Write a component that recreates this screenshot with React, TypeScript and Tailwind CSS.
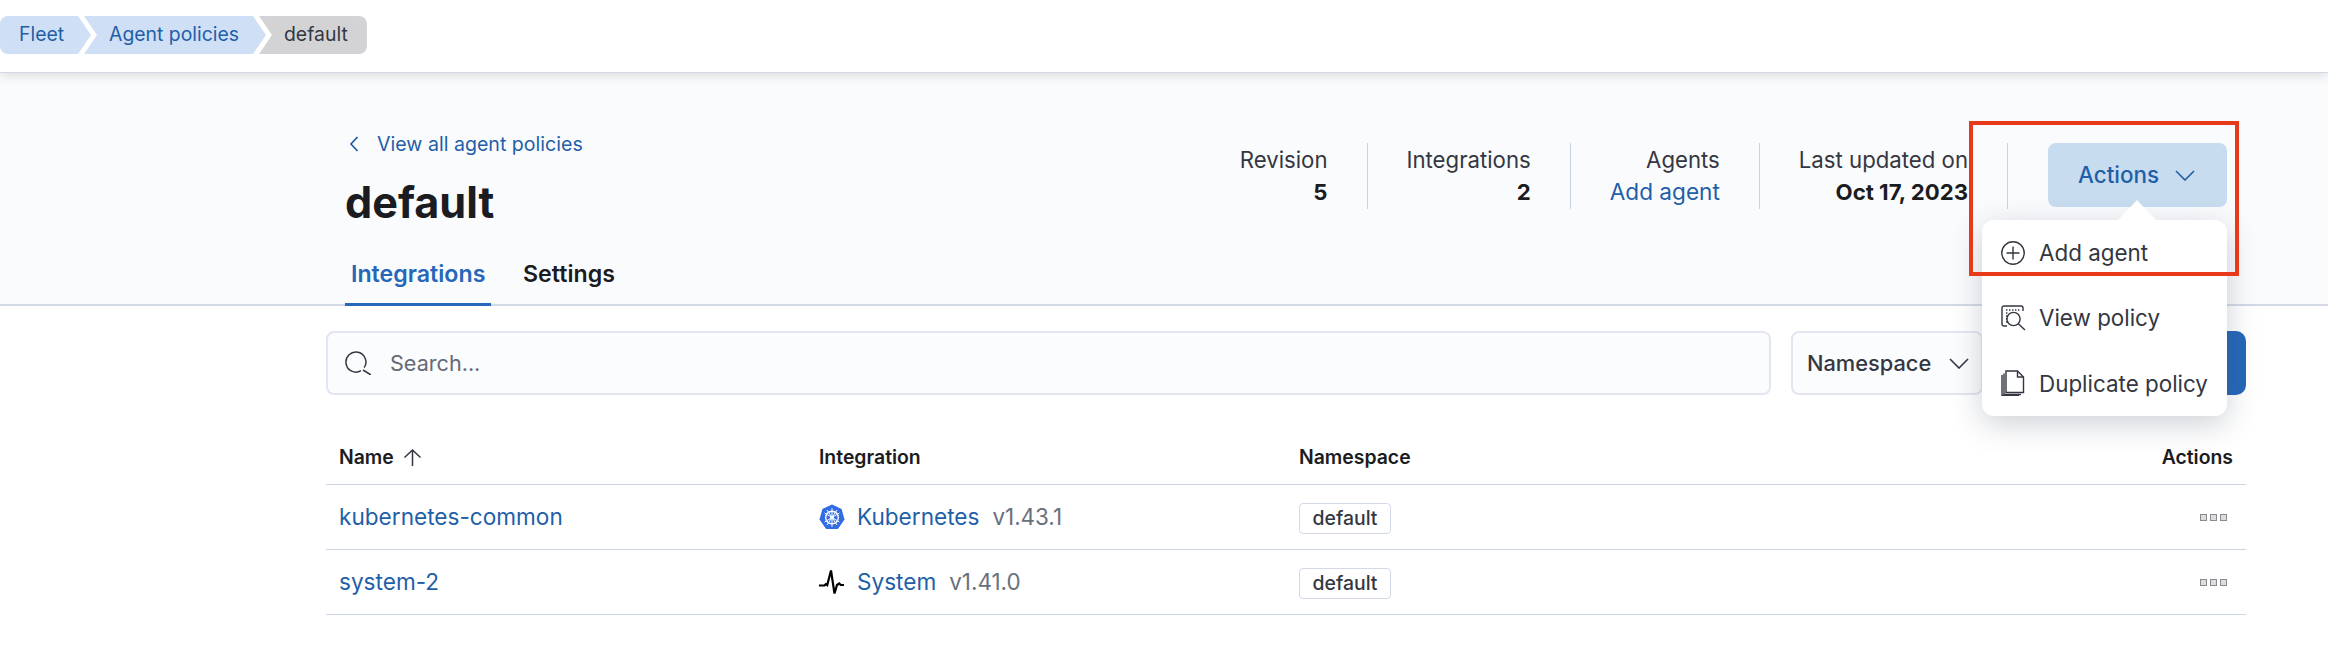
import React from "react";

const F = { fontFamily: "Inter, 'Liberation Sans', sans-serif" };

function Crumb({ label, kind }: { label: string; kind: "first" | "mid" | "last" }) {
  const clip =
    kind === "first"
      ? "polygon(0 0, calc(100% - 13px) 0, 100% 50%, calc(100% - 13px) 100%, 0 100%)"
      : kind === "last"
      ? "polygon(0 0, 100% 0, 100% 100%, 0 100%, 13px 50%)"
      : "polygon(0 0, calc(100% - 13px) 0, 100% 50%, calc(100% - 13px) 100%, 0 100%, 13px 50%)";
  const cls =
    kind === "first"
      ? "w-[91px] pl-[19px] rounded-l-[8px] bg-[#cfdff5] text-[#1f5fa8]"
      : kind === "mid"
      ? "-ml-[7px] w-[182px] pl-[25px] bg-[#cfdff5] text-[#1f5fa8]"
      : "-ml-[7px] w-[108px] pl-[25px] rounded-r-[8px] bg-[#d3d3d6] text-[#343741]";
  return (
    <div style={{ clipPath: clip }} className={`flex h-[38px] items-center text-[19.4px] ${cls}`}>
      {label}
    </div>
  );
}

function Stat({ label, value, link }: { label: string; value: string; link?: boolean }) {
  return (
    <div className="flex h-[66px] flex-col items-end justify-center border-r border-[#c9d3e3] pr-[39px]">
      <div className="whitespace-nowrap text-[22.2px] leading-[32px] text-[#343741]">{label}</div>
      <div className={`whitespace-nowrap leading-[32px] ${link ? "text-[22.6px] text-[#1f5fa8]" : "text-[22.2px] font-bold text-[#1a1c21]"}`}>{value}</div>
    </div>
  );
}

function PlusIcon() {
  return (
    <svg width="24" height="24" viewBox="0 0 24 24" fill="none" stroke="#343741" strokeWidth="1.4">
      <circle cx="12" cy="12" r="11.2" />
      <path d="M12 5.5v13M5.5 12h13" />
    </svg>
  );
}
function ViewIcon() {
  return (
    <svg width="26" height="26" viewBox="0 0 26 26" fill="none" stroke="#343741" strokeWidth="1.4">
      <path d="M6 21H3a2 2 0 0 1-2-2V3a2 2 0 0 1 2-2h17a2 2 0 0 1 2 2v3" />
      <path d="M5 5h14M5 8h3M5 11h2M5 14h1.5M5 17h1.5" strokeDasharray="1.4 1.6" />
      <circle cx="12.5" cy="14" r="6.6" />
      <path d="M17.5 19l6.5 6" />
    </svg>
  );
}
function CopyIcon() {
  return (
    <svg width="24" height="26" viewBox="0 0 24 26" fill="none" stroke="#343741" strokeWidth="1.4">
      <path d="M5 1h11.5L22.5 7v15.5H5z" />
      <path d="M16.5 1v6h6" />
      <path d="M3 3.5v21h17" />
      <path d="M1 5v20.5h17" />
    </svg>
  );
}
function Chevron({ color = "#343741" }: { color?: string }) {
  return (
    <svg width="20" height="11" viewBox="0 0 20 11" fill="none" stroke={color} strokeWidth="1.6">
      <path d="M1 1l9 9 9-9" />
    </svg>
  );
}
function K8s() {
  return (
    <svg width="26" height="26" viewBox="0 0 26 26">
      <path d="M13 0.5l9.6 4.6 2.9 10.4-6.6 9.5H7.1L0.5 15.5 3.4 5.1z" fill="#326ce5" />
      <g stroke="#fff" fill="none">
        <circle cx="13" cy="13.5" r="6.3" strokeWidth="1.4" />
        <circle cx="13" cy="13.5" r="1.5" fill="#fff" strokeWidth="0.6" />
        <path d="M13 4.2v18.6M5.6 9l14.8 9M20.4 9L5.6 18M8 21l10-15M18 21L8 6" strokeWidth="1" />
      </g>
    </svg>
  );
}
function Pulse() {
  return (
    <svg width="26" height="26" viewBox="0 0 26 26" fill="none" stroke="#000" strokeWidth="2.2">
      <path d="M0 16.5h5.5l1.3-1.3 1.4 1L12 1.5l3.5 23 2.5-8.5 2.2-1.5 1.6 1.5H25" />
    </svg>
  );
}
function Dots() {
  return (
    <div className="flex gap-[3px]">
      {[0, 1, 2].map((i) => (
        <span key={i} className="h-[7px] w-[7px] border-[1.5px] border-[#8a8a8f] bg-[#dcdcde]" />
      ))}
    </div>
  );
}

function Row({ name, integ, ver, icon }: { name: string; integ: string; ver: string; icon: React.ReactNode }) {
  return (
    <div className="flex h-[65px] items-center border-b border-[#cdd5e3] pl-[13px] pr-[19px] text-[22.6px]">
      <div className="w-[480px] text-[#1f5fa8]">{name}</div>
      <div className="flex w-[480px] items-center">
        <span className="mr-[12px] flex">{icon}</span>
        <span className="text-[#1f5fa8]">{integ}</span>
        <span className="ml-[13px] text-[22.4px] text-[#69707d]">{ver}</span>
      </div>
      <div className="flex-1">
        <span className="inline-flex h-[31px] w-[92px] items-center justify-center rounded-[4px] border border-[#d3dae6] text-[19.4px] font-medium text-[#343741]">default</span>
      </div>
      <Dots />
    </div>
  );
}

export default function App() {
  return (
    <div style={F} className="relative h-[656px] w-[2328px] overflow-hidden bg-white">
      {/* top bar */}
      <div className="relative z-10 flex h-[73px] items-start border-b border-[#d3dae6] bg-white pt-[16px] shadow-[0_3px_10px_rgba(0,0,0,0.12)]">
        <Crumb label="Fleet" kind="first" />
        <Crumb label="Agent policies" kind="mid" />
        <Crumb label="default" kind="last" />
      </div>

      {/* header */}
      <div className="relative flex h-[233px] border-b-2 border-[#d3dae6] bg-[#fafbfd] pl-[345px] pr-[101px]">
        <div className="flex-1 pt-[59px]">
          <div className="flex items-center text-[19.6px] leading-[24px] text-[#1f5fa8]">
            <svg width="10" height="16" viewBox="0 0 10 16" fill="none" stroke="#1f5fa8" strokeWidth="1.7" className="ml-[4px] mr-[18px]">
              <path d="M8.5 1L2 8l6.5 7" />
            </svg>
            View all agent policies
          </div>
          <h1 className="mt-[19px] text-[43.2px] font-bold leading-[54px] text-[#1a1c21]">default</h1>
          <div className="mt-[15px] flex text-[23.2px] font-semibold leading-[30px]">
            <div className="h-[62px] w-[146px] border-b-[3px] border-[#2567b8] pl-[6px] pt-[15px] text-[#2567b8]">Integrations</div>
            <div className="pl-[32px] pt-[15px] text-[#1a1c21]">Settings</div>
          </div>
        </div>
        <div className="flex items-start gap-[39px] pt-[70px]">
          <Stat label="Revision" value="5" />
          <Stat label="Integrations" value="2" />
          <Stat label="Agents" value="Add agent" link />
          <Stat label="Last updated on" value="Oct 17, 2023" />
          <div className="ml-px flex h-[64px] w-[179px] items-center justify-center gap-[16px] rounded-[8px] bg-[#c8dcf0] pr-[2px] text-[22.4px] font-medium text-[#1f5fa8]">
            Actions
            <Chevron color="#1f5fa8" />
          </div>
        </div>
      </div>

      {/* content */}
      <div className="pl-[326px] pr-[82px]">
        <div className="mt-[25px] flex gap-[20px]">
          <div className="flex h-[64px] flex-1 items-center rounded-[8px] border-2 border-[#e3e6f1] bg-[#fbfcfd] pl-[17px] text-[21.6px] text-[#646a77]">
            <svg width="26" height="24" viewBox="0 0 26 24" fill="none" stroke="#343741" strokeWidth="1.5" className="mr-[19px]">
              <path d="M19.2 16.7A10 10 0 1 0 16 19.7" />
              <path d="M18 19l8 5" />
            </svg>
            Search...
          </div>
          <div className="flex h-[64px] w-[192px] items-center rounded-[8px] border-2 border-[#e3e6f1] bg-[#fbfcfd] pl-[14px] text-[21.8px] font-medium text-[#343741]">
            <span className="w-[123px] whitespace-nowrap">Namespace</span>
            <span className="ml-[19px] flex"><Chevron /></span>
          </div>
          <div className="h-[64px] w-[243px] rounded-[10px] bg-[#2567b8]" />
        </div>

        <div className="mt-[37px] flex h-[53px] items-center border-b border-[#cdd5e3] pl-[13px] pr-[13px] text-[19.4px] font-semibold text-[#1a1c21]">
          <div className="flex w-[480px] items-center gap-[9px]">
            Name
            <svg width="19" height="17" viewBox="0 0 19 17" fill="none" stroke="#343741" strokeWidth="1.5"><path d="M9.5 17V1M1.5 8.5L9.5 1l8 7.5" /></svg>
          </div>
          <div className="w-[480px]">Integration</div>
          <div className="flex-1">Namespace</div>
          <div>Actions</div>
        </div>
        <Row name="kubernetes-common" integ="Kubernetes" ver="v1.43.1" icon={<K8s />} />
        <Row name="system-2" integ="System" ver="v1.41.0" icon={<Pulse />} />
      </div>

      {/* popover */}
      <div className="absolute left-[1982px] top-[220px] z-20 flex h-[196px] w-[245px] flex-col rounded-[12px] bg-white shadow-[0_8px_30px_rgba(60,70,90,0.25)]">
        <div className="absolute -top-[20px] left-[136px] h-0 w-0 border-x-[19px] border-b-[20px] border-x-transparent border-b-white" />
        <div className="flex flex-1 items-center pl-[19px] text-[22.4px] text-[#343741]"><span className="flex w-[38px]"><PlusIcon /></span>Add agent</div>
        <div className="flex flex-1 items-center pl-[19px] text-[22.4px] text-[#343741]"><span className="flex w-[38px]"><ViewIcon /></span>View policy</div>
        <div className="flex flex-1 items-center pl-[19px] text-[22.4px] text-[#343741]"><span className="flex w-[38px]"><CopyIcon /></span>Duplicate policy</div>
      </div>

      {/* highlight annotation */}
      <div className="pointer-events-none absolute left-[1969px] top-[121px] z-30 h-[155px] w-[270px] border-[4px] border-[#e8391a]" />
    </div>
  );
}
